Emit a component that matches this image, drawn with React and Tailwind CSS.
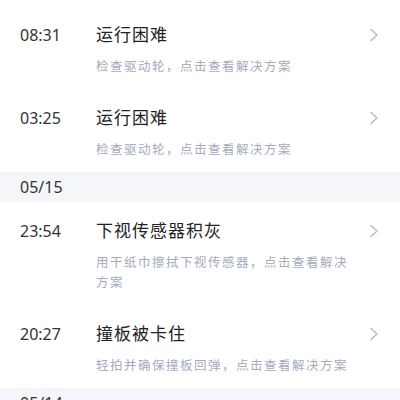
import React from 'react';

const groups = [
  {
    date: null,
    items: [
      { time: '08:31', title: '运行困难', desc: '检查驱动轮，点击查看解决方案' },
      { time: '03:25', title: '运行困难', desc: '检查驱动轮，点击查看解决方案' },
    ],
  },
  {
    date: '05/15',
    items: [
      { time: '23:54', title: '下视传感器积灰', desc: '用干纸巾擦拭下视传感器，点击查看解决方案' },
      { time: '20:27', title: '撞板被卡住', desc: '轻拍并确保撞板回弹，点击查看解决方案' },
    ],
  },
  {
    date: '05/14',
    items: [
      { time: '18:02', title: '运行困难', desc: '检查驱动轮，点击查看解决方案' },
    ],
  },
];

const Chevron = () => (
  <svg width="10" height="14" viewBox="0 0 10 14" fill="none">
    <polyline points="2,1.5 8,7 2,12.5" stroke="#b3b9c6" strokeWidth="1.4" strokeLinecap="round" strokeLinejoin="round" />
  </svg>
);

const Row = ({ item }) => (
  <div className="flex items-start pl-5 pr-5 pt-[17px] pb-[12px]">
    <div className="w-[76px] shrink-0 text-[16px] leading-6 text-[#333333]">{item.time}</div>
    <div className="flex-1 min-w-0">
      <div className="text-[17px] leading-6 tracking-[1px] text-[#222222]">{item.title}</div>
      <div className="mt-[10px] w-[254px] text-[12.5px] leading-[20px] tracking-[1.5px] text-[#a3abbc]">
        {item.desc}
      </div>
    </div>
    <div className="pt-[5px] pr-[1px]">
      <Chevron />
    </div>
  </div>
);

export default function App() {
  return (
    <div
      className="w-[400px] h-[400px] overflow-hidden bg-white pt-[6px]"
      style={{ fontFamily: '"Noto Sans", "Noto Sans CJK SC", sans-serif' }}
    >
      {groups.map((g, gi) => (
        <div key={gi}>
          {g.date && (
            <div className="h-[30px] flex items-center pl-5 bg-[#f5f6fa] text-[16px] text-[#333333]">
              {g.date}
            </div>
          )}
          {g.items.map((item, i) => (
            <Row key={i} item={item} />
          ))}
        </div>
      ))}
    </div>
  );
}
